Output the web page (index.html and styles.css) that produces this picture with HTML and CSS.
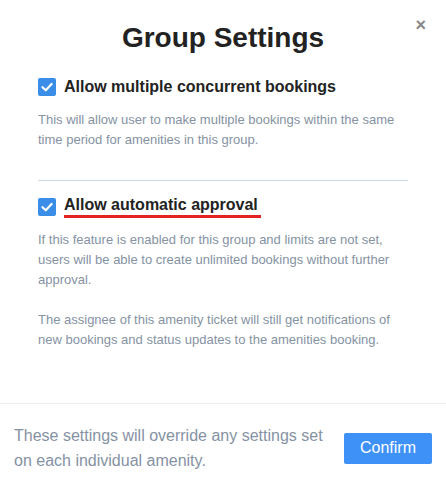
FILE: index.html
```html
<!DOCTYPE html>
<html lang="en">
<head>
  <meta charset="UTF-8" />
  <title>Group Settings</title>
  <link rel="stylesheet" href="styles.css">
</head>
<body>
  <div class="modal">
    <button class="cerrar" aria-label="Close">&#215;</button>
    <h1>Group Settings</h1>

    <div class="opcion">
      <label class="check">
        <span class="caja">
          <svg viewBox="0 0 18 18" width="18" height="18"><path d="M4.5 9.2 L7.8 12.3 L13.6 6" fill="none" stroke="#fff" stroke-width="2.2" stroke-linecap="round" stroke-linejoin="round"/></svg>
        </span>
        <span class="titulo">Allow multiple concurrent bookings</span>
      </label>
      <p>This will allow user to make multiple bookings within the same time period for amenities in this group.</p>
    </div>

    <hr />

    <div class="opcion">
      <label class="check">
        <span class="caja">
          <svg viewBox="0 0 18 18" width="18" height="18"><path d="M4.5 9.2 L7.8 12.3 L13.6 6" fill="none" stroke="#fff" stroke-width="2.2" stroke-linecap="round" stroke-linejoin="round"/></svg>
        </span>
        <span class="titulo subrayado">Allow automatic approval</span>
      </label>
      <p>If this feature is enabled for this group and limits are not set, users will be able to create unlimited bookings without further approval.</p>
      <p>The assignee of this amenity ticket will still get notifications of new bookings and status updates to the amenities booking.</p>
    </div>

    <div class="pie">
      <p>These settings will override any settings set on each individual amenity.</p>
      <button class="confirmar">Confirm</button>
    </div>
  </div>
</body>
</html>
```

FILE: styles.css
```css
body {
  margin: 0;
  font-family: 'Liberation Sans', Arial, sans-serif;
  background: #fff;
  color: #222;
}

.modal {
  position: relative;
  width: 446px;
  height: 487px;
  box-sizing: border-box;
  display: flex;
  flex-direction: column;
}

.cerrar {
  position: absolute;
  top: 16px;
  right: 20px;
  border: none;
  background: none;
  padding: 0;
  font-size: 18px;
  font-weight: bold;
  line-height: 18px;
  color: #888;
  cursor: pointer;
}

h1 {
  margin: 20px 0 0;
  font-size: 28px;
  line-height: 36px;
  text-align: center;
  color: #222;
}

.opcion { padding: 0 38px; }

.check {
  display: flex;
  align-items: center;
  gap: 8px;
}

.caja {
  width: 18px;
  height: 18px;
  border-radius: 2px;
  background: #3a8ee8;
  display: flex;
}

.titulo {
  font-size: 16px;
  font-weight: bold;
  line-height: 22px;
  color: #222;
}

.subrayado {
  border-bottom: 3px solid #e52222;
  line-height: 20px;
  padding-right: 3px;
}

.opcion:first-of-type .check { margin-top: 20px; }

.opcion p {
  margin: 12px 0 0;
  font-size: 13px;
  line-height: 20px;
  color: #8592a3;
}

.opcion p + p { margin-top: 20px; }

hr {
  margin: 30px 38px 14px;
  border: none;
  border-top: 1px solid #c8dcee;
}

.pie {
  margin-top: auto;
  border-top: 1px solid #ececec;
  height: 84px;
  box-sizing: border-box;
  padding: 5px 14px 0;
  display: flex;
  align-items: center;
  justify-content: space-between;
}

.pie p {
  margin: 0;
  width: 320px;
  font-size: 16px;
  line-height: 25px;
  color: #8592a3;
}

.confirmar {
  width: 88px;
  height: 31px;
  border: none;
  border-radius: 2px;
  background: #3d91f7;
  color: #fff;
  font-family: inherit;
  font-size: 16px;
  cursor: pointer;
}
```
